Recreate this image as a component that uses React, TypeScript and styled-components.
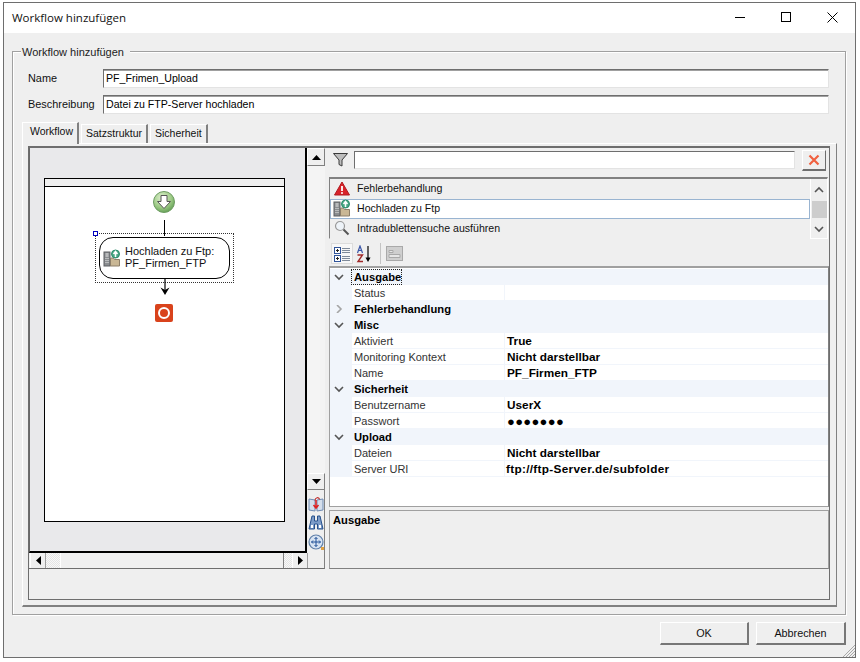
import styled, { createGlobalStyle } from "styled-components";

const GlobalStyle = createGlobalStyle`
  html, body {
    margin: 0;
    padding: 0;
    background: #fff;
  }
  body {
    font-family: "Liberation Sans", Arial, sans-serif;
    font-size: 11px;
    color: #000;
  }
  * {
    box-sizing: border-box;
  }
`;

interface GridRow {
  label: string;
  value?: string;
  section?: boolean;
  collapsed?: boolean;
  focused?: boolean;
  dots?: boolean;
  wide?: boolean;
}

const rows: GridRow[] = [
  { label: "Ausgabe", section: true, focused: true },
  { label: "Status" },
  { label: "Fehlerbehandlung", section: true, collapsed: true },
  { label: "Misc", section: true },
  { label: "Aktiviert", value: "True" },
  { label: "Monitoring Kontext", value: "Nicht darstellbar" },
  { label: "Name", value: "PF_Firmen_FTP" },
  { label: "Sicherheit", section: true },
  { label: "Benutzername", value: "UserX" },
  { label: "Passwort", value: "●●●●●●●", dots: true },
  { label: "Upload", section: true },
  { label: "Dateien", value: "Nicht darstellbar" },
  { label: "Server URI", value: "ftp://ftp-Server.de/subfolder", wide: true },
];

const FtpIcon = () => (
  <svg width="18" height="18" viewBox="0 0 18 18">
    <rect x="1" y="3" width="6" height="14" fill="#8a8d90" stroke="#5c5f62" />
    <path d="M2.5 5h3M2.5 7h3M2.5 9.5h1M4.5 9.5h1M2.5 11.5h1M4.5 11.5h1M2.5 13.5h1M4.5 13.5h1" stroke="#e8e8e8" />
    <path d="M7.5 9h3l1 1.5h5V17h-9z" fill="#c9b795" stroke="#8d7f69" />
    <circle cx="12.5" cy="5" r="4" fill="#4aa784" stroke="#2c8c6c" />
    <path d="M12.5 8V4M10.5 5l2-2.5 2 2.5" fill="none" stroke="#fff" strokeWidth="1.5" />
  </svg>
);

const Chevron = ({ dir, color }: { dir: "up" | "down" | "right"; color: string }) => {
  const d = dir === "up" ? "M1 6l4-4 4 4" : dir === "down" ? "M1 2l4 4 4-4" : "M3 0l4 4-4 4";
  return (
    <svg width="10" height="8" viewBox="0 0 10 8">
      <path d={d} fill="none" stroke={color} strokeWidth="1.6" />
    </svg>
  );
};

const App = () => {
  return (
    <>
      <GlobalStyle />
      <Window>
        <TitleBar>
          <TitleText>Workflow hinzufügen</TitleText>
          <TitleButtons>
            <svg width="11" height="11" viewBox="0 0 11 11">
              <path d="M0 5.5h10" stroke="#000" />
            </svg>
            <svg width="11" height="11" viewBox="0 0 11 11">
              <rect x="0.5" y="0.5" width="9" height="9" fill="none" stroke="#000" />
            </svg>
            <svg width="11" height="11" viewBox="0 0 11 11">
              <path d="M0.5 0.5l10 10M10.5 0.5l-10 10" stroke="#000" />
            </svg>
          </TitleButtons>
        </TitleBar>
        <Client>
          <Group>
            <Legend>Workflow hinzufügen</Legend>
            <FormRow>
              <FormLabel>Name</FormLabel>
              <TextBox>PF_Frimen_Upload</TextBox>
            </FormRow>
            <FormRow>
              <FormLabel>Beschreibung</FormLabel>
              <TextBox>Datei zu FTP-Server hochladen</TextBox>
            </FormRow>
            <TabStrip>
              <Tab $active>Workflow</Tab>
              <Tab>Satzstruktur</Tab>
              <Tab>Sicherheit</Tab>
            </TabStrip>
            <TabPage>
              <Panel>
                <PanelTop>
                  <LeftPane>
                    <DesignerRow>
                      <Canvas>
                        <Page>
                          <PageHeader />
                          <StartNode>
                            <svg width="24" height="24" viewBox="0 0 24 24">
                              <defs>
                                <radialGradient id="startFill" cx="40%" cy="30%" r="75%">
                                  <stop offset="0" stopColor="#dff0d0" />
                                  <stop offset="0.6" stopColor="#9ecb86" />
                                  <stop offset="1" stopColor="#5f9c52" />
                                </radialGradient>
                              </defs>
                              <circle cx="12" cy="12" r="10.5" fill="url(#startFill)" stroke="#6d9c62" />
                              <path d="M9 5.5h6v6h3.5L12 18.5 5.5 11.5H9z" fill="#fff" stroke="#555" />
                            </svg>
                          </StartNode>
                          <ConnectorTop />
                          <Selection />
                          <Handle />
                          <Activity>
                            <ActivityIcon>
                              <FtpIcon />
                            </ActivityIcon>
                            <ActivityText>
                              Hochladen zu Ftp:
                              <br />
                              PF_Firmen_FTP
                            </ActivityText>
                          </Activity>
                          <ArrowDown>
                            <svg width="10" height="17" viewBox="0 0 10 17">
                              <path d="M5 0v12" stroke="#000" strokeWidth="1.2" />
                              <path d="M0.5 8.5L5 11l4.5-2.5L5 16z" fill="#000" />
                            </svg>
                          </ArrowDown>
                          <StopNode>
                            <StopRing />
                          </StopNode>
                        </Page>
                      </Canvas>
                      <VScroll>
                        <ScrollButton $h={18}>
                          <svg width="9" height="5" viewBox="0 0 9 5">
                            <path d="M4.5 0L9 5H0z" fill="#000" />
                          </svg>
                        </ScrollButton>
                        <VTrack />
                        <ScrollButton $h={17}>
                          <svg width="9" height="5" viewBox="0 0 9 5">
                            <path d="M0 0h9L4.5 5z" fill="#000" />
                          </svg>
                        </ScrollButton>
                        <ToolIcons>
                          <svg width="16" height="16" viewBox="0 0 16 16">
                            <path d="M1 3l6 1v11l-6-1z" fill="#d5dfec" stroke="#6f8bb3" />
                            <path d="M15 3L9 4v11l6-1z" fill="#d5dfec" stroke="#6f8bb3" />
                            <path d="M7 4.5c0-3 4-4 4.5-1" fill="none" stroke="#c03030" strokeWidth="1.2" />
                            <path d="M8 4v8M5.5 9L8 12l2.5-3" fill="none" stroke="#e02020" strokeWidth="1.5" />
                          </svg>
                          <svg width="16" height="16" viewBox="0 0 16 16">
                            <path d="M4 1h2.5v5h3V1H12l3 13H9.5V9h-3v5H1z" fill="#7d9cc8" stroke="#26508c" />
                            <path d="M3 10h2v3H3zM11 10h2v3h-2z" fill="#fff" />
                          </svg>
                          <svg width="17" height="17" viewBox="0 0 17 17">
                            <circle cx="8" cy="8" r="7" fill="#d7e3f2" stroke="#5f7fa8" strokeWidth="1.2" />
                            <path d="M8 3.5v9M3.5 8h9M6.5 5L8 3.5 9.5 5M6.5 11L8 12.5 9.5 11M5 6.5L3.5 8 5 9.5M11 6.5L12.5 8 11 9.5" fill="none" stroke="#1f4f96" />
                            <rect x="13" y="13" width="3" height="3" fill="#e0a040" />
                          </svg>
                        </ToolIcons>
                      </VScroll>
                    </DesignerRow>
                    <HScroll>
                      <HButton>
                        <svg width="5" height="9" viewBox="0 0 5 9">
                          <path d="M5 0v9L0 4.5z" fill="#000" />
                        </svg>
                      </HButton>
                      <HChecker $w={14} />
                      <HTrack />
                      <HChecker $w={8} />
                      <HButton>
                        <svg width="5" height="9" viewBox="0 0 5 9">
                          <path d="M0 0l5 4.5L0 9z" fill="#000" />
                        </svg>
                      </HButton>
                    </HScroll>
                  </LeftPane>
                  <RightPane>
                    <FilterRow>
                      <svg width="15" height="14" viewBox="0 0 15 14">
                        <path d="M0.5 0.5h14L9 7v6L6 11.5V7z" fill="#bdbdbd" stroke="#3a3a3a" />
                      </svg>
                      <FilterInput />
                      <ClearButton>
                        <svg width="12" height="12" viewBox="0 0 12 12">
                          <path d="M1.5 1.5l9 9M10.5 1.5l-9 9" stroke="#f0603f" strokeWidth="2.2" />
                        </svg>
                      </ClearButton>
                    </FilterRow>
                    <ActivityList>
                      <ListItems>
                        <ListItem>
                          <ListIcon>
                            <svg width="16" height="15" viewBox="0 0 16 15">
                              <path d="M8 1l7.5 13H.5z" fill="#d8232a" stroke="#b01a20" />
                              <path d="M8 5v5" stroke="#fff" strokeWidth="1.8" />
                              <circle cx="8" cy="12" r="1" fill="#fff" />
                            </svg>
                          </ListIcon>
                          Fehlerbehandlung
                        </ListItem>
                        <ListItem $selected>
                          <ListIcon>
                            <FtpIcon />
                          </ListIcon>
                          Hochladen zu Ftp
                        </ListItem>
                        <ListItem>
                          <ListIcon>
                            <svg width="16" height="16" viewBox="0 0 16 16">
                              <circle cx="6" cy="6" r="4.5" fill="#eef3f8" stroke="#9a9a9a" strokeWidth="1.2" />
                              <path d="M9.5 9.5l5 5" stroke="#555" strokeWidth="2" />
                            </svg>
                          </ListIcon>
                          Intradublettensuche ausführen
                        </ListItem>
                      </ListItems>
                      <ListScroll>
                        <Chevron dir="up" color="#555" />
                        <ListThumb />
                        <Chevron dir="down" color="#555" />
                      </ListScroll>
                    </ActivityList>
                    <Toolbar>
                      <ToolButton $active>
                        <svg width="18" height="18" viewBox="0 0 18 18">
                          <rect x="1.5" y="2.5" width="6" height="6" fill="#fff" stroke="#30549a" />
                          <rect x="1.5" y="10.5" width="6" height="6" fill="#fff" stroke="#30549a" />
                          <path d="M3 5.5h3M4.5 4v3M3 13.5h3M4.5 12v3" stroke="#222" />
                          <path d="M9 3.5h8M9 5.5h8M9 7.5h8M9 11.5h8M9 13.5h8M9 15.5h8" stroke="#7f8a99" />
                        </svg>
                      </ToolButton>
                      <ToolButton>
                        <svg width="17" height="18" viewBox="0 0 17 18">
                          <path d="M1.5 8l2.5-7 2.5 7M2.5 5.5h3" fill="none" stroke="#3a56a8" strokeWidth="1.2" />
                          <path d="M1.5 10h5L2 16.5h5" fill="none" stroke="#a02a2a" strokeWidth="1.4" />
                          <path d="M12 1v14" stroke="#000" strokeWidth="1.2" />
                          <path d="M9.5 12.5L12 17l2.5-4.5z" fill="#000" />
                        </svg>
                      </ToolButton>
                      <ToolSeparator />
                      <ToolButton>
                        <svg width="17" height="15" viewBox="0 0 17 15">
                          <rect x="0.5" y="0.5" width="16" height="14" fill="#cfcfcf" stroke="#a9a9a9" />
                          <path d="M3 4.5h4v2H3zM3 8.5h11v3H3z" fill="#e6e6e6" stroke="#a9a9a9" />
                        </svg>
                      </ToolButton>
                    </Toolbar>
                    <PropertyGrid>
                      {rows.map((row) =>
                        row.section ? (
                          <SectionRow key={row.label}>
                            <Margin>
                              <Chevron dir={row.collapsed ? "right" : "down"} color={row.collapsed ? "#a5a5a5" : "#555"} />
                            </Margin>
                            <SectionLabel $focused={row.focused}>{row.label}</SectionLabel>
                          </SectionRow>
                        ) : (
                          <ItemRow key={row.label}>
                            <Margin />
                            <ItemLabel>{row.label}</ItemLabel>
                            <ItemValue $dots={row.dots} $wide={row.wide}>
                              {row.value}
                            </ItemValue>
                          </ItemRow>
                        )
                      )}
                    </PropertyGrid>
                    <Description>Ausgabe</Description>
                  </RightPane>
                </PanelTop>
              </Panel>
            </TabPage>
          </Group>
          <Footer>
            <DialogButton $w={89}>OK</DialogButton>
            <DialogButton $w={90}>Abbrechen</DialogButton>
            <Grip>
              <svg width="13" height="13" viewBox="0 0 13 13">
                <path d="M13 1L1 13M13 4L4 13M13 7l-6 6M13 10l-3 3" stroke="#a8a8a8" />
              </svg>
            </Grip>
          </Footer>
        </Client>
      </Window>
    </>
  );
};

const Window = styled.div`
  position: relative;
  margin: 2px 0 0 3px;
  width: 853px;
  height: 656px;
  border: 1px solid #6e6e6e;
  display: flex;
  flex-direction: column;
  background: #efefef;
`;

const TitleBar = styled.div`
  height: 30px;
  flex: none;
  background: #fff;
  display: flex;
  align-items: center;
  justify-content: space-between;
`;

const TitleText = styled.div`
  margin: -2px 0 0 8px;
  font-family: "Open Sans", sans-serif;
  font-size: 11.5px;
  color: #111;
`;

const TitleButtons = styled.div`
  display: flex;
  gap: 35px;
  margin-right: 17px;
  margin-top: -2px;
`;

const Client = styled.div`
  flex: 1;
  display: flex;
  flex-direction: column;
  padding: 18px 9px 0 8px;
`;

const Group = styled.div`
  position: relative;
  width: 834px;
  height: 564px;
  flex: none;
  border: 1px solid #a0a0a0;
  box-shadow: inset 1px 1px 0 #fff, 1px 1px 0 #fff;
  padding: 17px 8px 7px 9px;
  display: flex;
  flex-direction: column;
`;

const Legend = styled.div`
  position: absolute;
  left: 8px;
  top: -7px;
  padding: 0 6px 0 1px;
  background: #efefef;
  font-size: 11px;
  line-height: 14px;
  color: #222;
`;

const FormRow = styled.div`
  display: flex;
  align-items: center;
  margin: 0 8px 7px 6px;
  height: 19px;
  flex: none;
`;

const FormLabel = styled.div`
  width: 75px;
  flex: none;
  padding-bottom: 1px;
  font-size: 10.9px;
  color: #111;
`;

const TextBox = styled.div`
  flex: 1;
  height: 19px;
  background: #fff;
  border: 1px solid #e3e3e3;
  border-top: 1px solid #6e6e6e;
  border-left: 1px solid #6e6e6e;
  box-shadow: inset 0 1px 0 #a0a0a0;
  padding: 1px 0 0 2px;
  font-size: 10.6px;
  line-height: 14px;
  white-space: nowrap;
`;

const TabStrip = styled.div`
  display: flex;
  gap: 2px;
  align-items: flex-end;
  height: 22px;
  flex: none;
  position: relative;
  z-index: 1;
`;

const Tab = styled.div<{ $active?: boolean }>`
  height: ${(p) => (p.$active ? 22 : 19)}px;
  margin-bottom: ${(p) => (p.$active ? -1 : 0)}px;
  padding: 0 4px ${(p) => (p.$active ? 6 : 2)}px ${(p) => (p.$active ? 7 : 4)}px;
  background: #efefef;
  border-top: 1px solid #fff;
  border-left: 1px solid #fff;
  border-right: 2px solid #808080;
  display: flex;
  align-items: center;
  font-size: 10.5px;
  color: #111;
`;

const TabPage = styled.div`
  height: 464px;
  width: 815px;
  flex: none;
  border-top: 1px solid #fff;
  border-left: 1px solid #fff;
  border-right: 1px solid #808080;
  border-bottom: 2px solid #808080;
  padding: 2px 5px 6px 5px;
`;

const Panel = styled.div`
  height: 454px;
  width: 802px;
  border: 1px solid #6e6e6e;
  border-top-width: 2px;
  display: flex;
  flex-direction: column;
`;

const PanelTop = styled.div`
  display: flex;
  height: 421px;
  flex: none;
  gap: 4px;
`;

const LeftPane = styled.div`
  width: 296px;
  flex: none;
  display: flex;
  flex-direction: column;
  border-right: 1px solid #808080;
  border-bottom: 1px solid #6e6e6e;
`;

const DesignerRow = styled.div`
  flex: 1;
  display: flex;
  min-height: 0;
`;

const Canvas = styled.div`
  width: 278px;
  flex: none;
  background: #e9e9eb;
  border-left: 1px solid #696969;
  border-right: 2px solid #000;
  border-bottom: 2px solid #000;
  padding: 30px 0 0 14px;
`;

const Page = styled.div`
  position: relative;
  width: 241px;
  height: 344px;
  background: #fff;
  border: 1px solid #000;
`;

const PageHeader = styled.div`
  height: 8px;
  background: #efefef;
  border-bottom: 1px solid #000;
`;

const StartNode = styled.div`
  position: absolute;
  left: 107px;
  top: 11px;
  line-height: 0;
`;

const ConnectorTop = styled.div`
  position: absolute;
  left: 119px;
  top: 41px;
  width: 1px;
  height: 16px;
  background: #000;
`;

const Selection = styled.div`
  position: absolute;
  left: 50px;
  top: 54px;
  width: 139px;
  height: 50px;
  border: 1px dotted #333;
`;

const Handle = styled.div`
  position: absolute;
  left: 48px;
  top: 52px;
  width: 5px;
  height: 5px;
  background: #fff;
  border: 1px solid #0000c0;
`;

const Activity = styled.div`
  position: absolute;
  left: 54px;
  top: 58px;
  width: 131px;
  height: 42px;
  border: 1px solid #000;
  border-radius: 14px;
  background: #fff;
  display: flex;
  align-items: center;
`;

const ActivityIcon = styled.div`
  margin-left: 3px;
  width: 22px;
  line-height: 0;
`;

const ActivityText = styled.div`
  font-size: 11px;
  line-height: 12px;
  margin-top: -2px;
  color: #111;
  white-space: nowrap;
`;

const ArrowDown = styled.div`
  position: absolute;
  left: 115px;
  top: 100px;
  line-height: 0;
`;

const StopNode = styled.div`
  position: absolute;
  left: 110px;
  top: 125px;
  width: 18px;
  height: 18px;
  border-radius: 2px;
  background: #d9431c;
  display: flex;
  align-items: center;
  justify-content: center;
`;

const StopRing = styled.div`
  width: 12px;
  height: 12px;
  border-radius: 50%;
  border: 2px solid #fff;
`;

const VScroll = styled.div`
  flex: 1;
  display: flex;
  flex-direction: column;
`;

const ScrollButton = styled.div<{ $h: number }>`
  height: ${(p) => p.$h}px;
  flex: none;
  background: #efefef;
  border-top: 1px solid #fff;
  border-left: 1px solid #fff;
  border-right: 1px solid #808080;
  border-bottom: 1px solid #808080;
  display: flex;
  align-items: center;
  justify-content: center;
`;

const VTrack = styled.div`
  height: 307px;
  flex: none;
  background: #f4f4f4;
`;

const ToolIcons = styled.div`
  margin-top: 6px;
  margin-left: 1px;
  display: flex;
  flex-direction: column;
  gap: 3px;
  line-height: 0;
`;

const HScroll = styled.div`
  height: 15px;
  flex: none;
  width: 279px;
  display: flex;
  align-items: stretch;
  padding-left: 1px;
`;

const HButton = styled.div`
  width: 16px;
  flex: none;
  background: #efefef;
  border-left: 1px solid #fff;
  border-right: 1px solid #a0a0a0;
  display: flex;
  align-items: center;
  justify-content: center;
`;

const HChecker = styled.div<{ $w: number }>`
  width: ${(p) => p.$w}px;
  flex: none;
  background: repeating-conic-gradient(#e4e4e4 0% 25%, #f8f8f8 0% 50%) 0 0 / 2px 2px;
`;

const HTrack = styled.div`
  flex: 1;
  background: #f0f0f0;
  border-left: 1px solid #fff;
  border-right: 1px solid #808080;
`;

const RightPane = styled.div`
  flex: 1;
  min-width: 0;
  display: flex;
  flex-direction: column;
`;

const FilterRow = styled.div`
  height: 29px;
  flex: none;
  display: flex;
  align-items: center;
  padding: 0 0 5px 4px;
`;

const FilterInput = styled.div`
  width: 441px;
  height: 18px;
  margin-left: 6px;
  background: #fff;
  border: 1px solid #e3e3e3;
  border-top: 1px solid #6e6e6e;
  border-left: 1px solid #6e6e6e;
`;

const ClearButton = styled.div`
  width: 24px;
  height: 21px;
  margin-left: 7px;
  background: #efefef;
  border-top: 1px solid #fff;
  border-left: 1px solid #fff;
  border-right: 1px solid #6e6e6e;
  border-bottom: 2px solid #6e6e6e;
  display: flex;
  align-items: center;
  justify-content: center;
`;

const ActivityList = styled.div`
  height: 62px;
  width: 499px;
  flex: none;
  display: flex;
  border-top: 2px solid #808080;
  border-left: 1px solid #808080;
  border-bottom: 1px solid #fff;
  border-right: 1px solid #fff;
`;

const ListItems = styled.div`
  width: 480px;
  flex: none;
`;

const ListItem = styled.div<{ $selected?: boolean }>`
  height: 20px;
  display: flex;
  align-items: center;
  padding-bottom: 2px;
  font-size: 10.6px;
  white-space: nowrap;
  color: #111;
  background: ${(p) => (p.$selected ? "#fff" : "#efefef")};
  border: 1px solid ${(p) => (p.$selected ? "#99b4d1" : "transparent")};
`;

const ListIcon = styled.div`
  width: 26px;
  flex: none;
  display: flex;
  justify-content: center;
  padding-right: 5px;
  line-height: 0;
`;

const ListScroll = styled.div`
  flex: 1;
  border-left: 1px solid #fff;
  padding: 7px 0 5px 0;
  display: flex;
  flex-direction: column;
  align-items: center;
  justify-content: space-between;
`;

const ListThumb = styled.div`
  width: 15px;
  height: 17px;
  background: #cdcdcd;
`;

const Toolbar = styled.div`
  height: 27px;
  flex: none;
  display: flex;
  align-items: center;
  padding: 2px 0 0 2px;
`;

const ToolButton = styled.div<{ $active?: boolean }>`
  height: 21px;
  padding: 0 ${(p) => (p.$active ? 1 : 0)}px;
  display: flex;
  align-items: center;
  margin-right: 2px;
  background: ${(p) => (p.$active ? "#f7f7f7" : "transparent")};
  border: 1px solid ${(p) => (p.$active ? "#dcdcdc" : "transparent")};
`;

const ToolSeparator = styled.div`
  width: 1px;
  height: 21px;
  background: #c4c4c4;
  margin: 0 4px;
`;

const PropertyGrid = styled.div`
  height: 241px;
  flex: none;
  background: #fff;
  padding-top: 1px;
  border-top: 2px solid #a0a0a0;
  border-right: 1px solid #808080;
  border-bottom: 1px solid #a0a0a0;
  border-left: 1px solid #a0a0a0;
`;

const SectionRow = styled.div`
  height: 16px;
  display: flex;
  align-items: center;
  background: #f1f5fb;
`;

const Margin = styled.div`
  width: 21px;
  height: 100%;
  flex: none;
  background: #f1f5fb;
  display: flex;
  align-items: center;
  justify-content: center;
  padding-right: 3px;
`;

const SectionLabel = styled.div<{ $focused?: boolean }>`
  font-size: 11.2px;
  font-weight: bold;
  padding: 1px 1px 0 3px;
  line-height: 14px;
  height: 16px;
  outline: ${(p) => (p.$focused ? "1px dotted #222" : "none")};
  outline-offset: -1px;
`;

const ItemRow = styled.div`
  height: 16px;
  display: flex;
  background: #f1f5fb;
  gap: 1px;
`;

const ItemLabel = styled.div`
  width: 152px;
  flex: none;
  background: #fff;
  padding-left: 2px;
  font-size: 11px;
  line-height: 17px;
  color: #333;
  margin-bottom: 1px;
`;

const ItemValue = styled.div<{ $dots?: boolean; $wide?: boolean }>`
  flex: 1;
  background: #fff;
  padding-left: ${(p) => (p.$wide ? 1 : 2)}px;
  font-size: ${(p) => (p.$dots ? 13 : 11.8)}px;
  letter-spacing: ${(p) => (p.$dots ? 0.3 : p.$wide ? 0.3 : 0)}px;
  font-weight: bold;
  line-height: 17px;
  margin-bottom: 1px;
`;

const Description = styled.div`
  width: 500px;
  margin-top: 3px;
  height: 59px;
  flex: none;
  border: 1px solid #a0a0a0;
  border-bottom-color: #808080;
  padding: 3px 3px;
  font-size: 11.2px;
  font-weight: bold;
`;

const Footer = styled.div`
  position: relative;
  flex: 1;
  display: flex;
  justify-content: flex-end;
  gap: 7px;
  padding: 7px 0 0 0;
`;

const DialogButton = styled.div<{ $w: number }>`
  width: ${(p) => p.$w}px;
  height: 23px;
  background: #efefef;
  border-top: 1px solid #fff;
  border-left: 1px solid #fff;
  border-right: 2px solid #777;
  border-bottom: 2px solid #777;
  display: flex;
  align-items: center;
  justify-content: center;
  font-size: 10.8px;
  color: #111;
`;

const Grip = styled.div`
  position: absolute;
  right: -9px;
  bottom: 0;
  line-height: 0;
`;

export default App;
